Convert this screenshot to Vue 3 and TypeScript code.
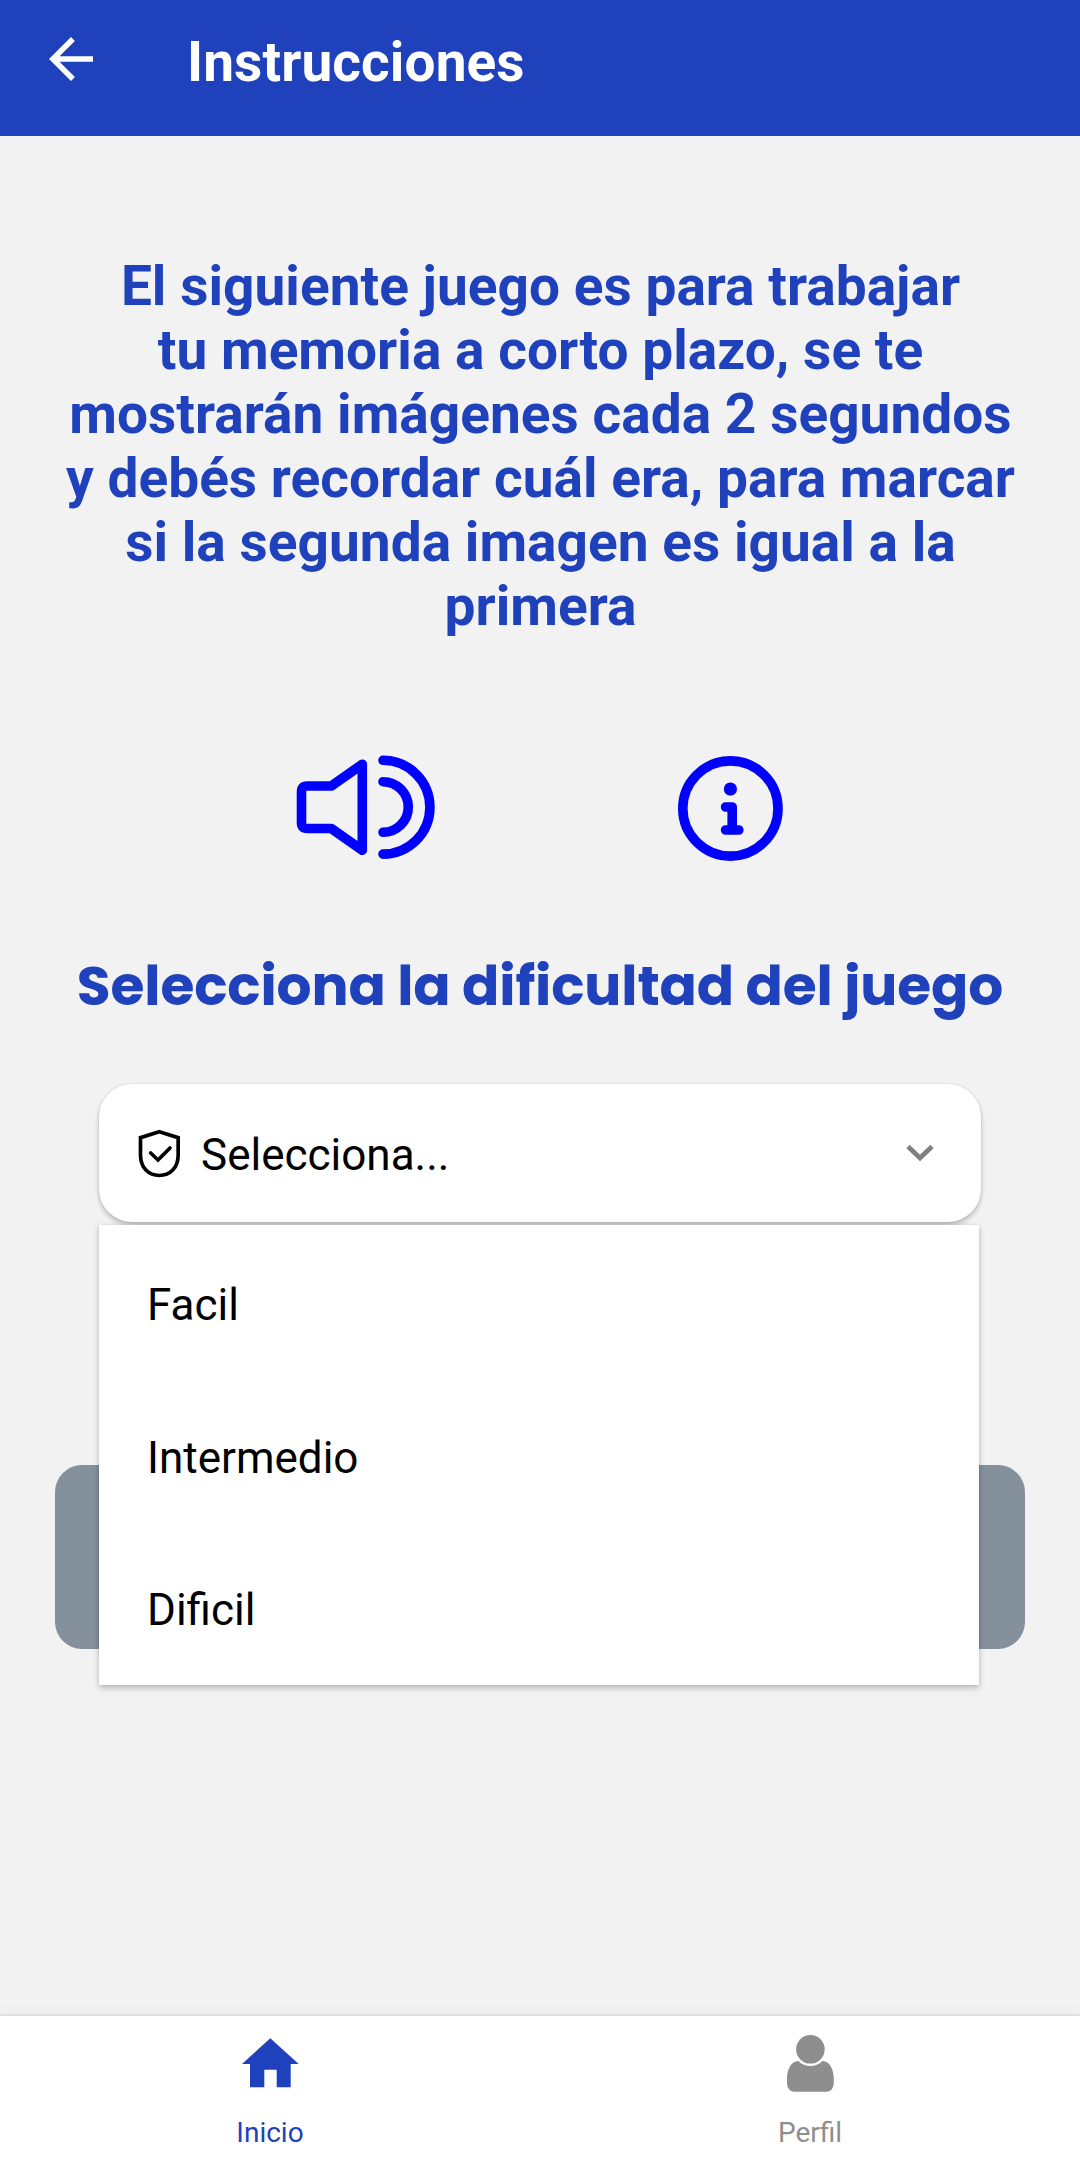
<script setup lang="ts">
const instructions: string[] = [
  'El siguiente juego es para trabajar',
  'tu memoria a corto plazo, se te',
  'mostrarán imágenes cada 2 segundos',
  'y debés recordar cuál era, para marcar',
  'si la segunda imagen es igual a la',
  'primera',
]
const options: string[] = ['Facil', 'Intermedio', 'Dificil']
</script>

<template>
  <div class="screen">
    <header class="app-bar">
      <svg class="back" viewBox="4 4 16 16" fill="#fff">
        <path d="M20 11H7.83l5.59-5.59L12 4l-8 8 8 8 1.41-1.41L7.83 13H20z" />
      </svg>
      <h1 class="app-title">Instrucciones</h1>
    </header>

    <main class="content">
      <p class="instructions">
        <span v-for="line in instructions" :key="line" class="line">{{ line }}</span>
      </p>

      <div class="actions">
        <svg class="speaker" viewBox="0 0 150 110" fill="none" stroke="#00f" stroke-width="9.6" stroke-linecap="round" stroke-linejoin="round">
          <path d="M41.3 36H17Q11.5 36 11.5 41.5V73Q11.5 78.5 17 78.5H41.3L72.3 100.3V14.2Z" />
          <path d="M93 31.7a25.3 25.3 0 0 1 0 50.6" />
          <path d="M93 10.3a46.9 46.9 0 0 1 0 93.8" />
        </svg>
        <svg class="info" viewBox="0 0 110 110" fill="none" stroke="#00f" stroke-width="9.6" stroke-linecap="round" stroke-linejoin="round">
          <circle cx="55.4" cy="55.5" r="47.6" />
          <circle cx="55.4" cy="36" r="6.6" fill="#00f" stroke="none" />
          <path d="M50.6 54H57.2V77M50.6 77H63.8" />
        </svg>
      </div>

      <h2 class="level-title">Selecciona la dificultad del juego</h2>

      <div class="picker">
        <div class="select">
          <svg class="shield" viewBox="0 0 132 153" fill="none" stroke="#000" stroke-width="11" stroke-linecap="round">
            <path d="M67 11L123.5 29V80C123.5 120 99 142.5 67 142.5S10.5 120 10.5 80V29Z" />
            <path d="M41 75L63 96L99 60" />
          </svg>
          <span class="placeholder">Selecciona...</span>
          <svg class="chevron" viewBox="0 0 28 18" fill="none" stroke="#808080" stroke-width="4.7">
            <path d="M2 2.5L14 14L26 2.5" />
          </svg>
        </div>
        <ul class="menu">
          <li v-for="option in options" :key="option" class="option">{{ option }}</li>
        </ul>
      </div>

      <button class="play" type="button" aria-label="Jugar"></button>
    </main>

    <nav class="tabs">
      <a class="tab active">
        <svg class="tab-icon" viewBox="0 0 60 60" fill="currentColor">
          <path d="M30.3 4.3L58.7 30H50.7V53.3H36.7V35.7H24.3V53.3H10V30H2Z" />
        </svg>
        <span class="tab-label">Inicio</span>
      </a>
      <a class="tab">
        <svg class="tab-icon" viewBox="0 0 60 60" fill="currentColor">
          <circle cx="30.4" cy="15.3" r="14.3" />
          <path d="M18.5 27C24.5 33.7 36.3 33.7 42.3 27C50 27 53.8 36 53.8 45V48.5C53.8 54 51 57.7 46.5 57.7H14.3C9.8 57.7 7 54 7 48.5V45C7 36 10.8 27 18.5 27Z" />
        </svg>
        <span class="tab-label">Perfil</span>
      </a>
    </nav>
  </div>
</template>

<style>
body {
  margin: 0;
}
</style>

<style scoped>
.screen {
  display: flex;
  flex-direction: column;
  width: 1080px;
  height: 2160px;
  background: #f2f2f2;
  font-family: Roboto, sans-serif;
  overflow: hidden;
}
.app-bar {
  display: flex;
  flex: none;
  align-items: flex-start;
  box-sizing: border-box;
  height: 136px;
  padding: 30px 49px 0;
  background: #1f41bb;
}
.back {
  flex: none;
  width: 44px;
  height: 44px;
  margin: 7px 94px 0 0;
}
.app-title {
  margin: 0;
  color: #fff;
  font-size: 55px;
  font-weight: 700;
  letter-spacing: 0.1px;
  line-height: 64px;
}
.content {
  display: flex;
  flex: 1;
  flex-direction: column;
  align-items: center;
  padding-top: 118px;
}
.instructions {
  display: flex;
  flex-direction: column;
  align-items: center;
  margin: 0;
  padding-left: 1px;
  color: #1f41bb;
  font-size: 55px;
  font-weight: 700;
  letter-spacing: 0.03px;
  line-height: 64px;
}
.line {
  white-space: nowrap;
}
.actions {
  display: flex;
  align-self: stretch;
  margin-top: 112px;
  padding-left: 290px;
}
.speaker {
  width: 150px;
  height: 110px;
}
.info {
  width: 110px;
  height: 110px;
  margin: 3px 0 0 235px;
}
.level-title {
  margin: 89px 0 0;
  color: #1f41bb;
  font-family: Poppins, Inter, sans-serif;
  font-size: 55px;
  font-weight: 700;
  letter-spacing: -0.12px;
  line-height: 68px;
  white-space: nowrap;
}
.picker {
  position: relative;
  width: 882px;
  margin-top: 64px;
}
.select {
  display: flex;
  align-items: center;
  box-sizing: border-box;
  height: 138px;
  padding: 0 47px 0 38px;
  border-radius: 33px;
  background: #fff;
  box-shadow: 0 3px 5px rgba(0, 0, 0, 0.24), 0 0 3px rgba(0, 0, 0, 0.08);
}
.shield {
  width: 44px;
  height: 51px;
}
.placeholder {
  flex: 1;
  margin: 4px 0 0 20px;
  font-size: 44px;
  line-height: 52px;
}
.chevron {
  width: 28px;
  height: 18px;
}
.menu {
  position: absolute;
  top: 141px;
  left: 0;
  z-index: 1;
  box-sizing: border-box;
  width: 880px;
  height: 460px;
  margin: 0;
  padding: 4px 0 0 48px;
  background: #fff;
  box-shadow: 0 3px 6px rgba(0, 0, 0, 0.22), 0 0 4px rgba(0, 0, 0, 0.08);
  list-style: none;
}
.option {
  display: flex;
  align-items: center;
  height: 152.5px;
  font-size: 44px;
  line-height: 52px;
}
.play {
  width: 970px;
  height: 184px;
  margin-top: 243px;
  padding: 0;
  border: 0;
  border-radius: 27px;
  background: #84919d;
}
.tabs {
  display: flex;
  flex: none;
  height: 144px;
  background: #fff;
  box-shadow: 0 -1px 2px rgba(0, 0, 0, 0.1), 0 -4px 12px rgba(0, 0, 0, 0.03);
}
.tab {
  display: flex;
  flex: 1;
  flex-direction: column;
  align-items: center;
  color: #8e8e8e;
}
.tab.active {
  color: #1f41bb;
}
.tab-icon {
  width: 60px;
  height: 60px;
  margin-top: 18px;
}
.tab-label {
  margin-top: 22px;
  font-size: 28px;
  line-height: 33px;
}
</style>
